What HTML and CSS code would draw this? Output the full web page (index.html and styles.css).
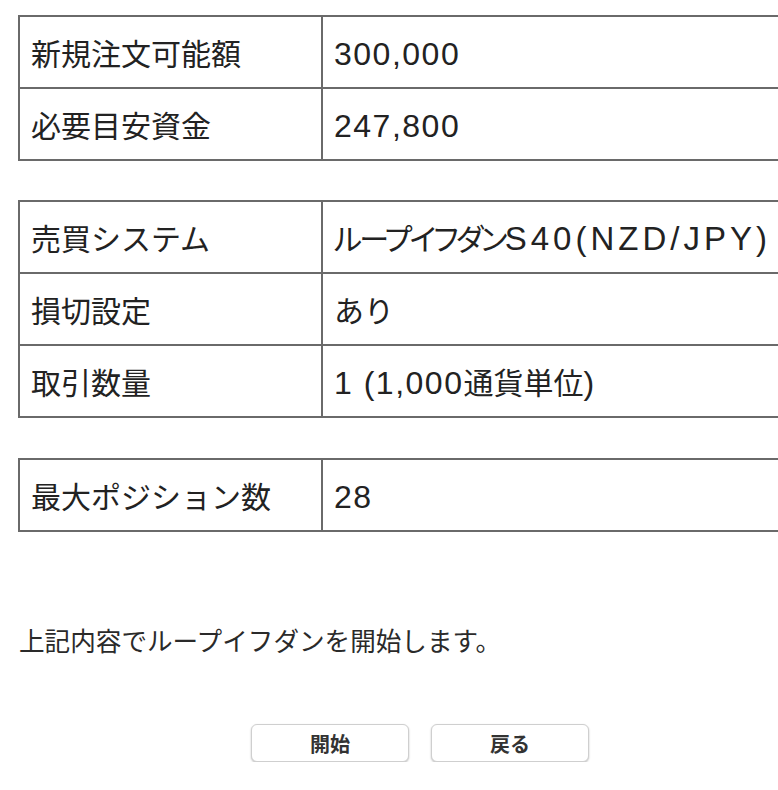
FILE: index.html
```html
<!DOCTYPE html>
<html lang="ja">
<head>
<meta charset="utf-8">
<title>ループイフダン 確認</title>
<link rel="stylesheet" href="styles.css">
</head>
<body>
<div class="page">
  <table class="info first">
    <tr><td class="label">新規注文可能額</td><td class="value"><span class="lat">300,000</span></td></tr>
    <tr><td class="label">必要目安資金</td><td class="value"><span class="lat">247,800</span></td></tr>
  </table>
  <table class="info">
    <tr><td class="label">売買システム</td><td class="value"><span class="kana">ループイフダン</span><span class="lat wide">S40(NZD/JPY)</span></td></tr>
    <tr><td class="label">損切設定</td><td class="value">あり</td></tr>
    <tr><td class="label">取引数量</td><td class="value"><span class="lat">1 (1,000</span>通貨単位<span class="lat">)</span></td></tr>
  </table>
  <table class="info">
    <tr><td class="label">最大ポジション数</td><td class="value"><span class="lat">28</span></td></tr>
  </table>
  <p class="msg">上記内容でループイフダンを開始します。</p>
  <div class="actions">
    <button class="btn" type="button">開始</button>
    <button class="btn" type="button">戻る</button>
  </div>
</div>
</body>
</html>
```

FILE: styles.css
```css
html, body {
  margin: 0;
  padding: 0;
  overflow: hidden;
  background: #ffffff;
}
.page {
  width: 802px;
  padding: 15px 0 0 18px;
  font-family: "Noto Sans CJK JP", sans-serif;
  color: #222222;
}
.info {
  width: 802px;
  border-collapse: collapse;
  border: 2px solid #606060;
  margin-bottom: 40px;
  font-size: 30px;
}
.info.first {
  margin-bottom: 39px;
}
.info td {
  border: 2px solid #6a6a6a;
  height: 70px;
  padding: 0 11px;
  vertical-align: middle;
  white-space: nowrap;
}
.info td.label {
  width: 279px;
}
.lat {
  font-family: "Liberation Sans", sans-serif;
  font-size: 32px;
  letter-spacing: 1.5px;
}
.lat.wide {
  font-size: 33px;
  letter-spacing: 4px;
}
.kana {
  font-feature-settings: "palt";
  letter-spacing: -2.6px;
}
.msg {
  margin: 89px 0 0 1px;
  font-size: 25.6px;
  color: #2a2a2a;
}
.actions {
  display: flex;
  justify-content: center;
  gap: 22px;
  margin-top: 66px;
  padding-left: 2px;
}
.btn {
  width: 158px;
  height: 38px;
  background: #ffffff;
  border: 1px solid #cfcfcf;
  border-radius: 6px;
  box-shadow: 0 1px 2px rgba(0, 0, 0, 0.25);
  font-family: "Noto Sans CJK JP", sans-serif;
  font-weight: bold;
  font-size: 20px;
  color: #333333;
  padding: 0;
}
```
